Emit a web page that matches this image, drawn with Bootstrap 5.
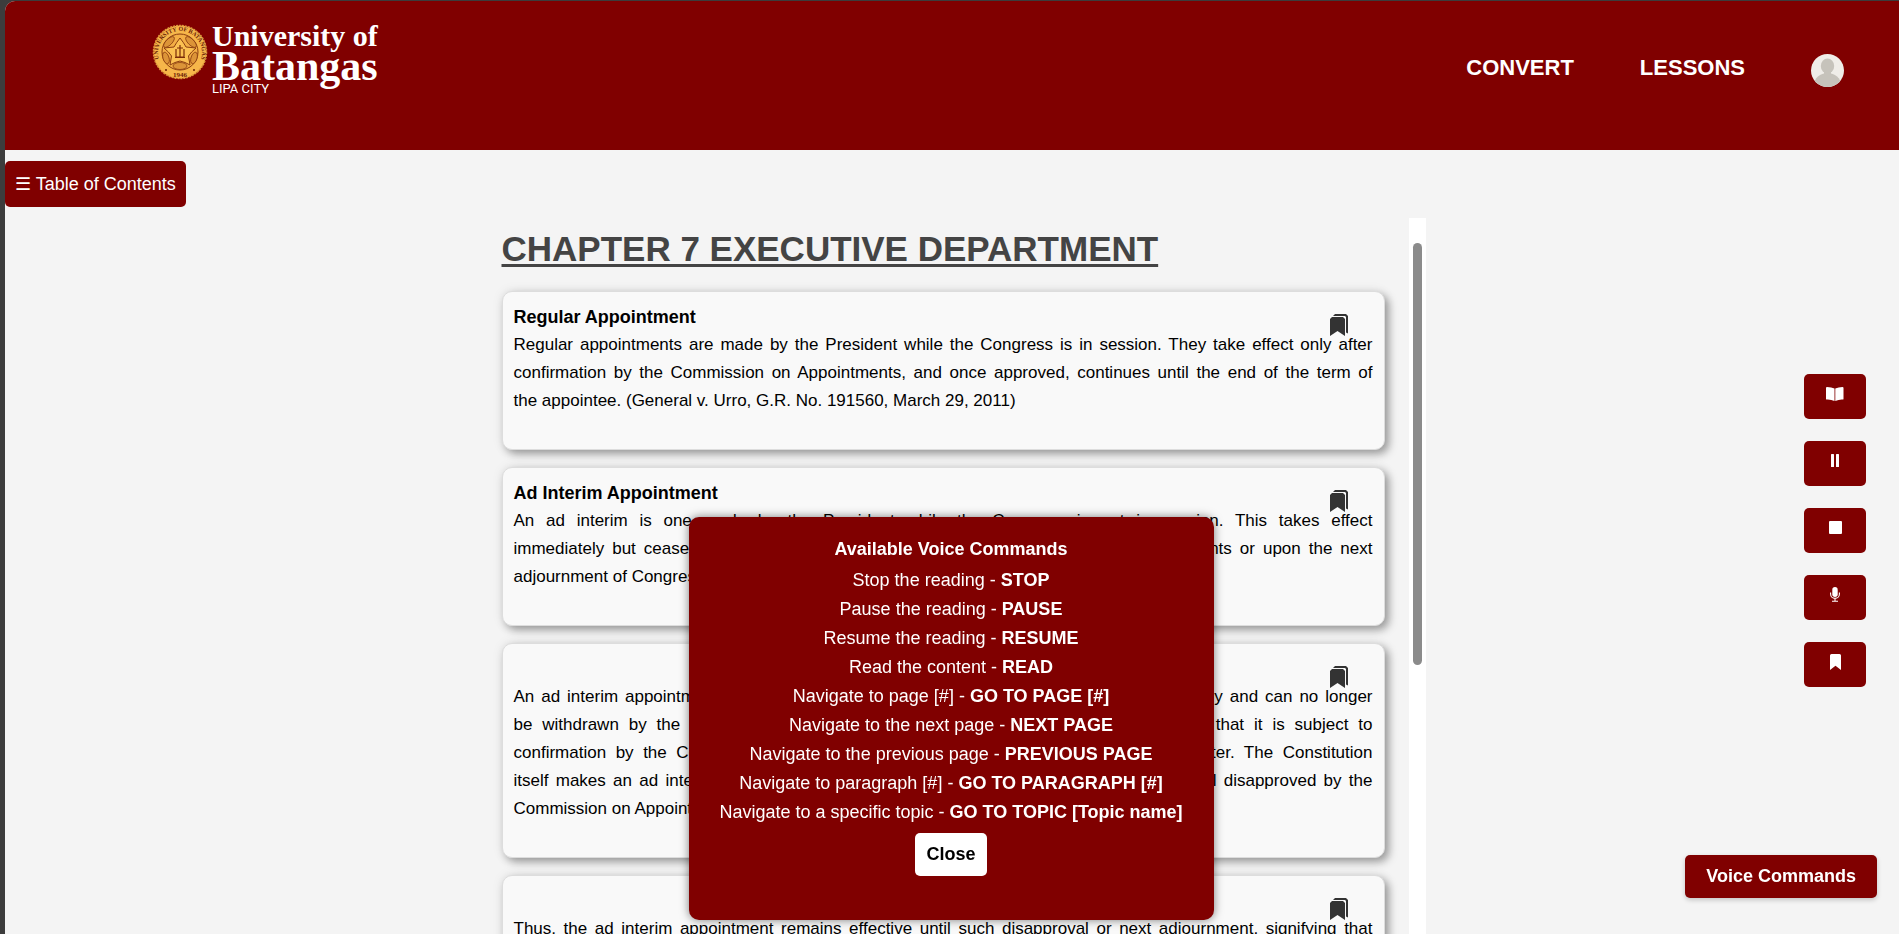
<!DOCTYPE html>
<html lang="en">
<head>
<meta charset="utf-8">
<meta name="viewport" content="width=device-width, initial-scale=1">
<title>Chapter 7 Executive Department</title>
<link href="https://cdn.jsdelivr.net/npm/bootstrap@5.3.0/dist/css/bootstrap.min.css" rel="stylesheet">
<style>
  :root { --maroon: #800000; }
  body { background: #3c3c3c; font-family: "Liberation Sans", Arial, sans-serif; font-size: 18px; line-height: 28px; color: #000; }
  .app-shell { height: 100vh; padding: 1px 0 0 5px; }
  .app-page { background: #f4f4f4; border-radius: 10px 0 0 0; }
  .site-header { background: var(--maroon); height: 149px; padding: 20px 55px 0 147px; }
  .brand-seal { margin-top: 3px; }
  .brand-text { font-family: "Liberation Serif", "Times New Roman", serif; font-weight: 700; }
  .brand-top { font-size: 30px; line-height: 30px; }
  .brand-main { font-size: 42px; line-height: 30px; }
  .brand-city { font-family: Roboto, sans-serif; font-size: 13px; line-height: 16px; font-weight: 400; }
  .site-nav { gap: 66px; padding-top: 33px; }
  .site-nav a { color: #fff; font-size: 22px; font-weight: 700; text-decoration: none; }
  .btn-maroon, .btn-maroon:hover { background: var(--maroon); color: #fff; border: 0; border-radius: 5px; }
  .toc-bar { padding: 11px 0; }
  .toc-btn { font-size: 18px; line-height: 26px; padding: 10px; }
  .reader { width: 50%; }
  .reader-body { padding: 12px 24px 0 23px; }
  .chapter-title { font-size: 35px; line-height: 38px; font-weight: 700; color: #444; text-decoration: underline; text-decoration-thickness: 3px; text-underline-offset: 3px; margin-bottom: 23px; }
  .topic { background: #f9f9f9; border: 1px solid #ddd; border-radius: 10px; padding: 11px 11px 34px; margin-bottom: 17px; box-shadow: 4px 4px 8px rgba(0,0,0,.35), 0 0 12px rgba(0,0,0,.08); }
  .topic h2 { font-size: 18px; line-height: 28px; min-height: 28px; font-weight: 700; margin: 0; }
  .topic p { font-size: 17px; margin: 0; }
  .topic p span { display: block; text-align: justify; text-align-last: justify; }
  .topic-mark { position: absolute; top: 22px; right: 36px; line-height: 0; }
  .scroll-track { width: 17px; background: #fff; padding: 25px 4px 0; }
  .scroll-thumb { height: 61%; border-radius: 5px; background: #8b8b8b; }
  .tool-rail { right: 33px; top: 374px; gap: 22px; }
  .tool-rail button { width: 62px; height: 45px; padding: 0 0 6px; }
  .voice-btn { right: 22px; bottom: 36px; font-size: 18px; font-weight: 700; line-height: 23px; padding: 10px 21px; box-shadow: 0 2px 5px rgba(0,0,0,.2) !important; }
  .voice-layer { left: 5px; right: 2px; bottom: 14px; pointer-events: none; }
  .voice-box { width: 525px; background: var(--maroon); border-radius: 10px; color: #fff; padding: 18px 20px 44px; box-shadow: 0 0 10px rgba(0,0,0,.5); pointer-events: auto; }
  .voice-box h2 { font-size: 18px; line-height: 28px; font-weight: 700; margin: 0 0 3px; }
  .voice-box ul { margin-bottom: 6px; }
  .voice-box li { line-height: 29px; }
  .close-btn, .close-btn:hover { background: #fff; color: #000; border: 0; border-radius: 5px; font-size: 18px; font-weight: 700; line-height: 23px; padding: 10px 11px; }
</style>
</head>
<body class="overflow-hidden">
<div class="app-shell">
<div class="app-page h-100 d-flex flex-column overflow-hidden">
  <header class="site-header d-flex justify-content-between align-items-start flex-shrink-0">
    <a href="#" class="d-flex align-items-start gap-1 text-white text-decoration-none">
      <svg class="brand-seal" width="56" height="56" viewBox="0 0 56 56" aria-hidden="true">
        <defs><path id="ring" d="M11.5 43.5A22 22 0 1 1 44.5 43.5"/></defs>
        <circle cx="28" cy="28" r="26.5" fill="#f6b64a" stroke="#dc963b" stroke-width="1.5" stroke-dasharray="2 1"/>
        <circle cx="28" cy="28" r="18" fill="#f3ae45" stroke="#8a3d10" stroke-width="1"/>
        <g fill="#dc9438" stroke="#8a3d10" stroke-width=".8">
          <ellipse cx="17" cy="18" rx="7" ry="3" transform="rotate(-45 17 18)"/>
          <ellipse cx="39" cy="18" rx="7" ry="3" transform="rotate(45 39 18)"/>
          <ellipse cx="14" cy="34" rx="6" ry="3" transform="rotate(72 14 34)"/>
          <ellipse cx="42" cy="34" rx="6" ry="3" transform="rotate(-72 42 34)"/>
          <ellipse cx="28" cy="42" rx="7" ry="3.5"/>
        </g>
        <path d="M28 14Q32 19 34 23L44 24Q39 28 36.500 32L38 41Q33 38 28 37Q23 38 18 41L19.500 32Q17 28 12 24L22 23Q24 19 28 14Z" fill="#fbc052" stroke="#8a3d10" stroke-width="1"/>
        <path d="M24 25v8h8v-8M28 21v12M25 24h6M23 33.500h10" fill="none" stroke="#7a2a08" stroke-width="1.200"/>
        <text font-family="Liberation Serif" font-size="6" font-weight="700" fill="#6a2005"><textPath href="#ring" startOffset="50%" text-anchor="middle">UNIVERSITY OF BATANGAS</textPath></text>
        <text x="28" y="53" text-anchor="middle" font-family="Liberation Serif" font-size="7" font-weight="700" fill="#6a2005">1946</text>
        <circle cx="14" cy="46" r="1" fill="#6a2005"/><circle cx="42" cy="46" r="1" fill="#6a2005"/>
      </svg>
      <span class="brand-text d-flex flex-column">
        <span class="brand-top">University of</span>
        <span class="brand-main">Batangas</span>
        <span class="brand-city">LIPA CITY</span>
      </span>
    </a>
    <nav class="site-nav d-flex align-items-start">
      <a href="#">CONVERT</a>
      <a href="#">LESSONS</a>
      <a href="#" aria-label="Profile">
        <svg class="d-block" width="33" height="33" viewBox="0 0 33 33">
          <defs><clipPath id="face"><circle cx="16.500" cy="16.500" r="16.500"/></clipPath></defs>
          <g clip-path="url(#face)"><rect width="33" height="33" fill="#efede8"/><g fill="#c6c3bb"><ellipse cx="16.500" cy="12" rx="6.700" ry="7.500"/><rect x="13" y="16" width="7" height="5"/><ellipse cx="16.500" cy="31" rx="13.500" ry="12"/></g></g>
        </svg>
      </a>
    </nav>
  </header>

  <div class="toc-bar flex-shrink-0 d-flex align-items-start">
    <button type="button" class="btn btn-maroon toc-btn">☰ Table of Contents</button>
  </div>

  <main class="reader mx-auto d-flex flex-grow-1 overflow-hidden">
    <div class="reader-body flex-grow-1 overflow-hidden">
      <h1 class="chapter-title">CHAPTER 7 EXECUTIVE DEPARTMENT</h1>

      <article class="topic position-relative">
        <a href="#" class="topic-mark" aria-label="Bookmark"><svg width="18" height="22" viewBox="0 0 18 22" fill="#333"><path d="M2 3H13L15 5V22L7.500 17L0 22V5Z"/><path d="M3 2L5 0H16L18 2V19.500L16 18.500V3L15 2Z"/></svg></a>
        <h2>Regular Appointment</h2>
        <p><span>Regular appointments are made by the President while the Congress is in session. They take effect only after</span>
          <span>confirmation by the Commission on Appointments, and once approved, continues until the end of the term of</span>
          the appointee. (General v. Urro, G.R. No. 191560, March 29, 2011)</p>
      </article>

      <article class="topic position-relative">
        <a href="#" class="topic-mark" aria-label="Bookmark"><svg width="18" height="22" viewBox="0 0 18 22" fill="#333"><path d="M2 3H13L15 5V22L7.500 17L0 22V5Z"/><path d="M3 2L5 0H16L18 2V19.500L16 18.500V3L15 2Z"/></svg></a>
        <h2>Ad Interim Appointment</h2>
        <p><span>An ad interim is one made by the President while the Congress is not in session. This takes effect</span>
          <span>immediately but ceases to be effective if disapproved by the Commission on Appointments or upon the next</span>
          adjournment of Congress.</p>
      </article>

      <article class="topic position-relative">
        <a href="#" class="topic-mark" aria-label="Bookmark"><svg width="18" height="22" viewBox="0 0 18 22" fill="#333"><path d="M2 3H13L15 5V22L7.500 17L0 22V5Z"/><path d="M3 2L5 0H16L18 2V19.500L16 18.500V3L15 2Z"/></svg></a>
        <h2></h2>
        <p><span>An ad interim appointment is a permanent appointment because it takes effect immediately and can no longer</span>
          <span>be withdrawn by the President once the appointee has qualified into office. The fact that it is subject to</span>
          <span>confirmation by the Commission on Appointments does not alter its permanent character. The Constitution</span>
          <span>itself makes an ad interim appointment permanent in character by making it effective until disapproved by the</span>
          Commission on Appointments or until the next adjournment of Congress.</p>
      </article>

      <article class="topic position-relative">
        <a href="#" class="topic-mark" aria-label="Bookmark"><svg width="18" height="22" viewBox="0 0 18 22" fill="#333"><path d="M2 3H13L15 5V22L7.500 17L0 22V5Z"/><path d="M3 2L5 0H16L18 2V19.500L16 18.500V3L15 2Z"/></svg></a>
        <h2></h2>
        <p><span>Thus, the ad interim appointment remains effective until such disapproval or next adjournment, signifying that</span></p>
      </article>
    </div>
    <div class="scroll-track flex-shrink-0"><div class="scroll-thumb"></div></div>
  </main>
</div>
</div>

<aside class="tool-rail position-fixed d-flex flex-column">
  <button type="button" class="btn btn-maroon d-flex align-items-center justify-content-center" aria-label="Read"><svg width="18" height="14" viewBox="0 0 18 14" fill="#fff"><path d="M8.500 1.500V14Q5 12.300 1 12.500Q0 12.600 0 12V1Q0 0 1 0Q5.500 0 8.500 1.500Z"/><path d="M9.300 1.500V14Q13 12.300 16.500 12.500Q17.500 12.600 17.500 12V1Q17.500 0 16.500 0Q12.500 0 9.300 1.500Z"/></svg></button>
  <button type="button" class="btn btn-maroon d-flex align-items-center justify-content-center" aria-label="Pause"><svg width="8" height="13" viewBox="0 0 8 13" fill="#fff"><rect width="3" height="13" rx=".5"/><rect x="5" width="3" height="13" rx=".5"/></svg></button>
  <button type="button" class="btn btn-maroon d-flex align-items-center justify-content-center" aria-label="Stop"><svg width="13" height="13" viewBox="0 0 13 13" fill="#fff"><rect width="13" height="13" rx="1"/></svg></button>
  <button type="button" class="btn btn-maroon d-flex align-items-center justify-content-center" aria-label="Microphone"><svg width="10" height="15" viewBox="0 0 10 15" fill="#fff"><rect x="2.300" width="5.400" height="10" rx="2.700"/><path d="M.6 5.500V7a4.400 4.400 0 0 0 8.800 0V5.500M5 11.400V14M2 14.300h6" fill="none" stroke="#fff" stroke-width="1.100"/></svg></button>
  <button type="button" class="btn btn-maroon d-flex align-items-center justify-content-center" aria-label="Bookmarks"><svg width="11" height="16" viewBox="0 0 11 16" fill="#fff"><path d="M1.500 0H9.500Q11 0 11 1.500V16L5.500 11.700L0 16V1.500Q0 0 1.500 0Z"/></svg></button>
</aside>

<div class="voice-layer position-fixed d-flex justify-content-center">
  <section class="voice-box text-center" role="dialog" aria-labelledby="voiceTitle">
    <h2 id="voiceTitle">Available Voice Commands</h2>
    <ul class="list-unstyled">
      <li>Stop the reading - <b>STOP</b></li>
      <li>Pause the reading - <b>PAUSE</b></li>
      <li>Resume the reading - <b>RESUME</b></li>
      <li>Read the content - <b>READ</b></li>
      <li>Navigate to page [#] - <b>GO TO PAGE [#]</b></li>
      <li>Navigate to the next page - <b>NEXT PAGE</b></li>
      <li>Navigate to the previous page - <b>PREVIOUS PAGE</b></li>
      <li>Navigate to paragraph [#] - <b>GO TO PARAGRAPH [#]</b></li>
      <li>Navigate to a specific topic - <b>GO TO TOPIC [Topic name]</b></li>
    </ul>
    <button type="button" class="btn close-btn">Close</button>
  </section>
</div>

<button type="button" class="btn btn-maroon voice-btn position-fixed">Voice Commands</button>

<script src="https://cdn.jsdelivr.net/npm/bootstrap@5.3.0/dist/js/bootstrap.bundle.min.js"></script>
</body>
</html>
